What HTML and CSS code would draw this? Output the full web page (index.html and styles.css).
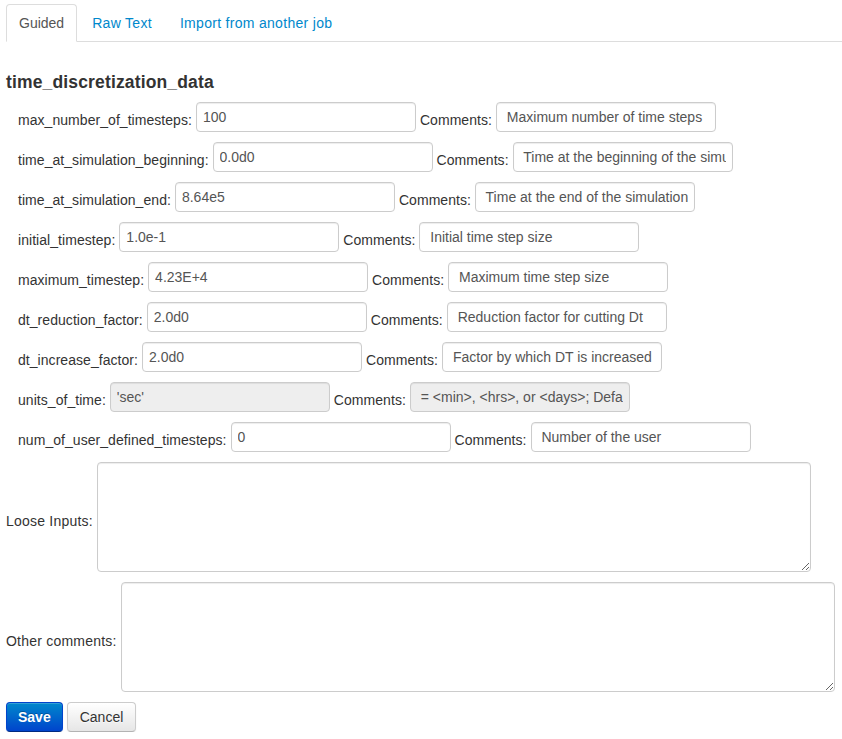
FILE: index.html
```html
<!DOCTYPE html>
<html>
<head>
<meta charset="utf-8">
<link rel="stylesheet" href="styles.css">
</head>
<body>
<div class="page">
  <ul class="tabs">
    <li class="tab active"><a>Guided</a></li>
    <li class="tab"><a>Raw Text</a></li>
    <li class="tab"><a>Import from another job</a></li>
  </ul>
  <h4 class="section-title">time_discretization_data</h4>
  <form class="form">
    <div class="field-row">
      <label>max_number_of_timesteps:</label>
      <input class="text-input" type="text" value="100">
      <label>Comments:</label>
      <input class="text-input" type="text" value=" Maximum number of time steps">
    </div>
    <div class="field-row">
      <label>time_at_simulation_beginning:</label>
      <input class="text-input" type="text" value="0.0d0">
      <label>Comments:</label>
      <input class="text-input" type="text" value=" Time at the beginning of the simulation">
    </div>
    <div class="field-row">
      <label>time_at_simulation_end:</label>
      <input class="text-input" type="text" value="8.64e5">
      <label>Comments:</label>
      <input class="text-input" type="text" value=" Time at the end of the simulation">
    </div>
    <div class="field-row">
      <label>initial_timestep:</label>
      <input class="text-input" type="text" value="1.0e-1">
      <label>Comments:</label>
      <input class="text-input" type="text" value=" Initial time step size">
    </div>
    <div class="field-row">
      <label>maximum_timestep:</label>
      <input class="text-input" type="text" value="4.23E+4">
      <label>Comments:</label>
      <input class="text-input" type="text" value=" Maximum time step size">
    </div>
    <div class="field-row">
      <label>dt_reduction_factor:</label>
      <input class="text-input" type="text" value="2.0d0">
      <label>Comments:</label>
      <input class="text-input" type="text" value=" Reduction factor for cutting Dt">
    </div>
    <div class="field-row">
      <label>dt_increase_factor:</label>
      <input class="text-input" type="text" value="2.0d0">
      <label>Comments:</label>
      <input class="text-input" type="text" value=" Factor by which DT is increased">
    </div>
    <div class="field-row">
      <label>units_of_time:</label>
      <input class="text-input" type="text" value="'sec'" disabled>
      <label>Comments:</label>
      <input class="text-input" type="text" value=" = &lt;min&gt;, &lt;hrs&gt;, or &lt;days&gt;; Default is sec" disabled>
    </div>
    <div class="field-row">
      <label>num_of_user_defined_timesteps:</label>
      <input class="text-input" type="text" value="0">
      <label>Comments:</label>
      <input class="text-input" type="text" value=" Number of the user">
    </div>
    <div class="area-row">
      <label>Loose Inputs:</label>
      <textarea class="text-area"></textarea>
    </div>
    <div class="area-row">
      <label>Other comments:</label>
      <textarea class="text-area"></textarea>
    </div>
    <div class="actions">
      <button type="button" class="btn btn-primary">Save</button>
      <button type="button" class="btn">Cancel</button>
    </div>
  </form>
</div>
</body>
</html>
```
FILE: styles.css
```css
html, body {
  margin: 0;
  padding: 0;
  background: #fff;
}
body {
  font-family: "Liberation Sans", Arial, sans-serif;
  font-size: 14px;
  line-height: 20px;
  color: #333;
}
.page {
  padding: 4px 0 0 6px;
}
.tabs {
  list-style: none;
  margin: 0 0 30px 0;
  padding: 0;
  display: flex;
  border-bottom: 1px solid #ddd;
}
.tab {
  margin-bottom: -1px;
}
.tab a {
  display: block;
  padding: 8px 12px;
  margin-right: 2px;
  line-height: 20px;
  letter-spacing: 0.3px;
  border: 1px solid transparent;
  border-radius: 4px 4px 0 0;
  color: #0088cc;
  cursor: pointer;
}
.tab.active a {
  color: #555;
  letter-spacing: 0;
  background: #fff;
  border-color: #ddd #ddd transparent #ddd;
}
.section-title {
  margin: 10px 0;
  font-size: 17.5px;
  line-height: 20px;
  font-weight: bold;
  letter-spacing: 0.15px;
  color: #333;
}
.field-row {
  display: flex;
  align-items: flex-start;
  gap: 4px;
  padding-left: 12px;
  margin-bottom: 10px;
}
.field-row label {
  padding-top: 8px;
  line-height: 20px;
  letter-spacing: 0.05px;
  white-space: nowrap;
}
.text-input {
  box-sizing: border-box;
  width: 220px;
  height: 30px;
  margin: 0;
  padding: 4px 6px;
  font-family: "Liberation Sans", Arial, sans-serif;
  font-size: 14px;
  line-height: 20px;
  color: #555;
  background: #fff;
  border: 1px solid #ccc;
  border-radius: 4px;
  box-shadow: inset 0 1px 1px rgba(0, 0, 0, 0.075);
  outline: none;
}
.text-input:disabled {
  background: #eee;
  color: #555;
  -webkit-text-fill-color: #555;
  opacity: 1;
}
.area-row {
  display: flex;
  align-items: center;
  gap: 4px;
  margin-bottom: 10px;
}
.area-row label {
  padding-top: 8px;
  letter-spacing: 0.22px;
  white-space: nowrap;
}
.text-area {
  box-sizing: border-box;
  width: 714px;
  height: 110px;
  margin: 0;
  padding: 4px 6px;
  font-family: "Liberation Sans", Arial, sans-serif;
  font-size: 14px;
  border: 1px solid #ccc;
  border-radius: 4px;
  box-shadow: inset 0 1px 1px rgba(0, 0, 0, 0.075);
  outline: none;
  resize: both;
}
.actions {
  display: flex;
  gap: 4px;
}
.btn {
  box-sizing: border-box;
  height: 30px;
  padding: 4px 12px;
  font-family: "Liberation Sans", Arial, sans-serif;
  font-size: 14px;
  line-height: 20px;
  color: #333;
  text-shadow: 0 1px 1px rgba(255, 255, 255, 0.75);
  background: linear-gradient(to bottom, #ffffff, #e6e6e6);
  border: 1px solid #ccc;
  border-bottom-color: #b3b3b3;
  border-radius: 4px;
  box-shadow: inset 0 1px 0 rgba(255, 255, 255, 0.2), 0 1px 2px rgba(0, 0, 0, 0.05);
  cursor: pointer;
}
.btn-primary {
  padding: 4px 11px;
  color: #fff;
  font-weight: bold;
  text-shadow: 0 -1px 0 rgba(0, 0, 0, 0.25);
  background: linear-gradient(to bottom, #0088cc, #0044cc);
  border-color: #0044cc #0044cc #002a80;
}
```
